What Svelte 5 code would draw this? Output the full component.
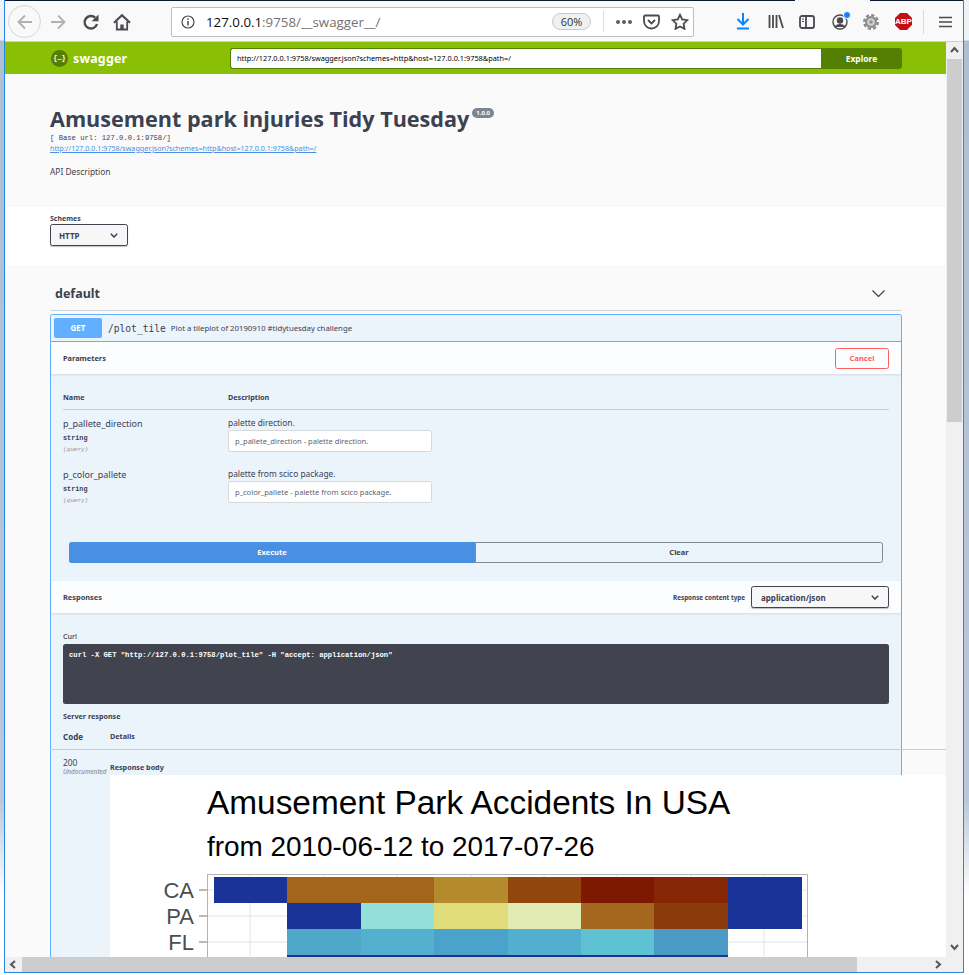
<script lang="ts">
  const NAVY = '#1a3399';
  const cellW = 73.4;
  const rowH = 26;
  const rows: (string | null)[][] = [
    [NAVY, '#a3641c', '#a3641c', '#b58a2c', '#93450e', '#7c1900', '#852705', NAVY],
    [null, NAVY, '#93e0d8', '#e0dc7a', '#e2ebb3', '#a5661d', '#8a3a0b', NAVY],
    [null, '#4fa8ca', '#55b0d0', '#4ba2ca', '#52afcd', '#5fc2d4', '#499bc6', null],
    [null, NAVY, NAVY, NAVY, NAVY, NAVY, NAVY, null],
  ];
  const states = ['CA', 'PA', 'FL'];
  const gridX = [250, 324, 397, 471, 544, 617, 691, 764];
  const gridY = [890, 916, 942];
</script>

<div class="window">
  <div class="frame">
    <div class="titlestrip"><span class="active-tab"></span></div>

    <header class="toolbar">
      <div class="nav">
        <span class="back">
          <svg width="18" height="18" viewBox="0 0 18 18" fill="none" stroke="#b1b1b3" stroke-width="1.8"><path d="M16 9H2.5M9 2.5 2.5 9 9 15.500"/></svg>
        </span>
        <svg class="fwd" width="18" height="18" viewBox="0 0 18 18" fill="none" stroke="#b1b1b3" stroke-width="1.8"><path d="M2 9h13.500M9 2.500 15.500 9 9 15.500"/></svg>
        <svg class="reload" width="18" height="18" viewBox="0 0 18 18" fill="none" stroke="#4a4a4f" stroke-width="2.400"><path d="M15 11a6.300 6.300 0 1 1-1.800-6.400"/><path d="M16.500 1.500v6.800H9.700z" fill="#4a4a4f" stroke="none"/></svg>
        <svg class="home" width="18" height="18" viewBox="0 0 18 18" fill="none" stroke="#4a4a4f"><path d="M1 9.800 9 2.300l8 7.500" stroke-width="2.200"/><path d="M3.800 8.500v8h10.400v-8" stroke-width="1.800"/><path d="M7.300 16.500v-5h3.400v5z" fill="#4a4a4f" stroke="none"/></svg>
      </div>
      <div class="urlbar">
        <svg class="site-icon" width="14" height="14" viewBox="0 0 14 14" fill="none" stroke="#4a4a4f" stroke-width="1.200"><circle cx="7" cy="7" r="6"/><path d="M7 6v4.500M7 3.300v1.500" stroke-width="1.500"/></svg>
        <span class="url"><b>127.0.0.1</b>:9758/__swagger__/</span>
        <span class="zoom-pill">60%</span>
        <span class="sep"></span>
        <span class="dots"><i></i><i></i><i></i></span>
        <svg class="pocket" width="17" height="16" viewBox="0 0 17 16" fill="none" stroke="#4a4a4f" stroke-width="1.800"><path d="M2 1.500h13a1 1 0 0 1 1 1V7a7.500 7.500 0 0 1-15 0V2.500a1 1 0 0 1 1-1z"/><path d="M5 6l3.500 3.500L12 6"/></svg>
        <svg class="star" width="18" height="17" viewBox="0 0 18 17" fill="none" stroke="#4a4a4f" stroke-width="1.800"><path d="M9 1.800l2.200 4.700 5.100.7-3.700 3.500.9 5.100L9 13.400l-4.500 2.400.9-5.100L1.700 7.200l5.100-.7z"/></svg>
      </div>
      <div class="tools">
        <svg class="download" width="14" height="17" viewBox="0 0 14 17" fill="none" stroke="#0a84ff" stroke-width="2"><path d="M7 0v10M1.500 6 7 11.500 12.500 6"/><path d="M1 15.500h12"/></svg>
        <svg width="16" height="15" viewBox="0 0 16 15" fill="none" stroke="#4a4a4f" stroke-width="1.800"><path d="M1.500 1v13M5 1v13M8.500 1v13M11 1l4 13"/></svg>
        <svg width="16" height="14" viewBox="0 0 16 14" fill="none" stroke="#4a4a4f" stroke-width="1.800"><rect x="1" y="1" width="14" height="12" rx="2"/><path d="M7 1v12"/><path d="M3 4h2M3 6.500h2" stroke-width="1.200"/></svg>
        <span class="account">
          <svg width="16" height="16" viewBox="0 0 16 16" fill="none" stroke="#4a4a4f" stroke-width="1.400"><circle cx="8" cy="8" r="7"/><circle cx="8" cy="6.500" r="2.500" fill="#4a4a4f"/><path d="M3.500 13c1-3 8-3 9 0" fill="#4a4a4f"/></svg>
          <i></i>
        </span>
        <svg width="16" height="16" viewBox="0 0 16 16" fill="none"><circle cx="8" cy="8" r="6.800" stroke="#8a8a8a" stroke-width="2.400" stroke-dasharray="3.200 2.140"/><circle cx="8" cy="8" r="6" fill="#8f8f8f"/><circle cx="8" cy="8" r="3.800" fill="#cfcfcf"/><circle cx="8" cy="8" r="1.700" fill="#8f8f8f"/></svg>
        <span class="abp">ABP</span>
        <span class="tool-sep"></span>
        <svg width="13" height="12" viewBox="0 0 13 12" fill="none" stroke="#4a4a4f" stroke-width="1.600"><path d="M0 1.500h13M0 6h13M0 10.500h13"/></svg>
      </div>
    </header>

    <div class="viewport">
      <div class="page-wrap">
        <main class="page">
          <div class="topbar">
            <div class="brand">
              <span class="logo">{'{…}'}</span>
              <span class="brand-name">swagger</span>
            </div>
            <div class="explore">
              <span class="explore-input">http://127.0.0.1:9758/swagger.json?schemes=http&amp;host=127.0.0.1:9758&amp;path=/</span>
              <span class="explore-btn">Explore</span>
            </div>
          </div>

          <section class="info">
            <h2>Amusement park injuries Tidy Tuesday<small>1.0.0</small></h2>
            <pre class="base-url">[ Base url: 127.0.0.1:9758/]</pre>
            <a class="spec-link" href="#top">http://127.0.0.1:9758/swagger.json?schemes=http&amp;host=127.0.0.1:9758&amp;path=/</a>
            <p class="desc">API Description</p>
          </section>

          <section class="schemes">
            <span class="schemes-label">Schemes</span>
            <div class="select scheme-select"><span>HTTP</span><svg width="8" height="5" viewBox="0 0 8 5" fill="none" stroke="#3b4151" stroke-width="1.500"><path d="M.8.800 4 4l3.200-3.200"/></svg></div>
          </section>

          <section class="tag-wrap">
            <div class="tag">
              <span>default</span>
              <svg width="13" height="7" viewBox="0 0 13 7" fill="none" stroke="#3b4151" stroke-width="1.200"><path d="M.5.500l6 6 6-6"/></svg>
            </div>

            <div class="opblock">
              <div class="summary">
                <span class="method">GET</span>
                <span class="path">/plot_tile</span>
                <span class="summary-text">Plot a tileplot of 20190910 #tidytuesday challenge</span>
              </div>

              <div class="section-head params-head">
                <span class="section-title">Parameters</span>
                <span class="cancel">Cancel</span>
              </div>

              <div class="params">
                <div class="params-grid head">
                  <span>Name</span><span>Description</span>
                </div>
                <div class="params-grid row first">
                  <div class="param-name">p_pallete_direction<b>string</b><em>(query)</em></div>
                  <div class="param-desc">palette direction.<span class="text-input">p_pallete_direction - palette direction.</span></div>
                </div>
                <div class="params-grid row">
                  <div class="param-name">p_color_pallete<b>string</b><em>(query)</em></div>
                  <div class="param-desc">palette from scico package.<span class="text-input">p_color_pallete - palette from scico package.</span></div>
                </div>
              </div>

              <div class="actions">
                <span class="execute">Execute</span>
                <span class="clear">Clear</span>
              </div>

              <div class="section-head responses-head">
                <span class="section-title">Responses</span>
                <div class="content-type">
                  <span class="ct-label">Response content type</span>
                  <div class="select ct-select"><span>application/json</span><svg width="8" height="5" viewBox="0 0 8 5" fill="none" stroke="#3b4151" stroke-width="1.500"><path d="M.8.800 4 4l3.200-3.200"/></svg></div>
                </div>
              </div>

              <div class="responses">
                <span class="curl-label">Curl</span>
                <pre class="curl">curl -X GET "http://127.0.0.1:9758/plot_tile" -H "accept: application/json"</pre>
                <span class="server-label">Server response</span>
                <div class="resp-head"><span class="code-h">Code</span><span class="details-h">Details</span></div>
                <div class="resp-row">
                  <div class="code-cell">200<em>Undocumented</em></div>
                  <div class="details-cell">
                    <span class="body-label">Response body</span>
                  </div>
                </div>
              </div>
            </div>
            <span class="overflow-line"></span>
          </section>

          <div class="plot">
            <svg width="836" height="182" viewBox="110 775 836 182">
              <text x="207" y="814" class="plot-title">Amusement Park Accidents In USA</text>
              <text x="207" y="856" class="plot-sub">from 2010-06-12 to 2017-07-26</text>
              <rect x="207.500" y="874.500" width="600" height="90" fill="#fff" stroke="#b3b3b3" />
              {#each gridX as x}
                <path d="M{x} 875v82" stroke="#e4e4e4" />
              {/each}
              {#each gridY as y}
                <path d="M208 {y}h599" stroke="#e4e4e4" />
              {/each}
              {#each rows as row, r}
                {#each row as fill, c}
                  {#if fill}
                    <rect x={214 + c * cellW} y={877 + r * rowH} width={cellW + 0.5} height={rowH} {fill} shape-rendering="crispEdges" />
                  {/if}
                {/each}
              {/each}
              {#each states as s, i}
                <text x="194" y={898 + i * 26} class="axis" text-anchor="end">{s}</text>
                <path d="M199 {890 + i * 26}h8" stroke="#777" />
              {/each}
            </svg>
          </div>
        </main>
        <div class="hscroll">
          <svg class="arrow" width="8" height="9" viewBox="0 0 8 9" fill="none" stroke="#555" stroke-width="2"><path d="M6 1 2 4.500 6 8"/></svg>
          <span class="hthumb"></span>
          <svg class="arrow" width="8" height="9" viewBox="0 0 8 9" fill="none" stroke="#555" stroke-width="2"><path d="M2 1l4 3.500L2 8"/></svg>
        </div>
      </div>
      <div class="vscroll">
        <svg width="9" height="8" viewBox="0 0 9 8" fill="none" stroke="#555" stroke-width="2"><path d="M1 6l3.500-4L8 6"/></svg>
        <span class="vthumb"></span>
        <svg class="vdown" width="9" height="8" viewBox="0 0 9 8" fill="none" stroke="#555" stroke-width="2"><path d="M1 2l3.500 4L8 2"/></svg>
      </div>
    </div>
  </div>
</div>

<style>
  :global(body) {
    margin: 0;
    background: #fff;
  }

  .window {
    width: 969px;
    height: 975px;
    box-sizing: border-box;
    padding: 0 5px 2px 4px;
    background: linear-gradient(#eef1f5 0, #eef1f5 40px, #aebfd3 41px, #b9c8da 82%, #fff 92%);
    font-family: 'Noto Sans', 'Open Sans', sans-serif;
    color: #3b4151;
  }

  .frame {
    height: 100%;
    box-sizing: border-box;
    border-left: 1px solid #2a85e0;
    border-right: 1px solid #2a85e0;
    border-bottom: 1px solid #2a85e0;
    display: flex;
    flex-direction: column;
    overflow: hidden;
  }

  .titlestrip {
    height: 1px;
    background: #0c1a33;
    position: relative;
    flex: none;
  }

  .active-tab {
    position: absolute;
    left: 790px;
    width: 75px;
    top: 0;
    height: 1px;
    background: #f9f9fa;
  }

  .toolbar {
    flex: none;
    height: 41px;
    background: #f9f9fa;
    border-bottom: 1px solid #cfcfd1;
    display: flex;
    align-items: center;
    box-sizing: border-box;
    padding-top: 1px;
  }

  .nav {
    display: flex;
    align-items: center;
    width: 166px;
    flex: none;
    padding-left: 3px;
    box-sizing: border-box;
  }

  .back {
    width: 31px;
    height: 31px;
    border: 1px solid #d6d6d7;
    border-radius: 50%;
    display: flex;
    align-items: center;
    justify-content: center;
    background: #f9f9fa;
  }

  .fwd {
    margin-left: 8px;
  }

  .reload {
    margin-left: 15px;
  }

  .home {
    margin-left: 13px;
  }

  .urlbar {
    width: 523px;
    height: 30px;
    box-sizing: border-box;
    background: #fff;
    border: 1px solid #bebebe;
    border-radius: 2px;
    display: flex;
    align-items: center;
    padding: 0 4px 0 9px;
  }

  .url {
    margin-left: 11px;
    font-family: 'Open Sans', sans-serif;
    font-size: 13.300px;
    color: #737373;
    flex: 1;
  }

  .url b {
    font-weight: 400;
    color: #0c0c0d;
  }

  .zoom-pill {
    width: 37px;
    height: 15px;
    line-height: 15px;
    border: 1px solid #c8c8c8;
    background: #f0f0f0;
    border-radius: 9px;
    text-align: center;
    font-size: 11px;
    font-family: 'Open Sans', sans-serif;
    color: #333;
  }

  .sep {
    width: 1px;
    height: 21px;
    background: #dcdcdc;
    margin: 0 12px;
  }

  .dots {
    display: flex;
    gap: 2px;
    margin-right: 11px;
  }

  .dots i {
    width: 4px;
    height: 4px;
    border-radius: 50%;
    background: #5d5d60;
  }

  .star {
    margin-left: 11px;
  }

  .tools {
    display: flex;
    align-items: center;
    margin-left: 42px;
    gap: 15px;
  }

  .download {
    margin-right: 3px;
  }

  .account {
    position: relative;
    display: flex;
    margin-left: 2px;
  }

  .account i {
    position: absolute;
    top: -3px;
    right: -3px;
    width: 6px;
    height: 6px;
    border-radius: 50%;
    background: #0a84ff;
    border: 1px solid #f9f9fa;
  }

  .abp {
    width: 17px;
    height: 17px;
    margin-left: 1px;
    clip-path: polygon(30% 0, 70% 0, 100% 30%, 100% 70%, 70% 100%, 30% 100%, 0 70%, 0 30%);
    background: #c70d14;
    color: #fff;
    font: 700 8px 'Liberation Sans', sans-serif;
    text-align: center;
    line-height: 17px;
  }

  .tool-sep {
    width: 1px;
    height: 24px;
    background: #d8d8d8;
    margin-left: -4px;
  }

  .viewport {
    flex: 1;
    min-height: 0;
    display: flex;
  }

  .page-wrap {
    width: 941px;
    flex: none;
    display: flex;
    flex-direction: column;
    min-height: 0;
  }

  .page {
    flex: 1;
    min-height: 0;
    overflow: hidden;
    background: #fff;
    position: relative;
  }

  .topbar {
    height: 32px;
    background: #89bf04;
    display: flex;
    align-items: center;
    padding-left: 46px;
  }

  .brand {
    width: 180px;
    display: flex;
    align-items: center;
    gap: 5px;
  }

  .logo {
    width: 17px;
    height: 17px;
    border-radius: 50%;
    background: #547f00;
    color: #fff;
    font: 700 7px 'Liberation Mono', monospace;
    text-align: center;
    line-height: 17px;
  }

  .brand-name {
    color: #fff;
    font-weight: 700;
    font-size: 12.400px;
    letter-spacing: 0.2px;
  }

  .explore {
    display: flex;
    width: 672px;
    height: 21px;
    margin-left: -1px;
  }

  .explore-input {
    flex: 1;
    background: #fff;
    border: 1px solid #547f00;
    border-right: 0;
    border-radius: 3px 0 0 3px;
    font-size: 7.350px;
    color: #000;
    line-height: 19px;
    padding-left: 6px;
  }

  .explore-btn {
    width: 81px;
    background: #547f00;
    color: #fff;
    font-weight: 700;
    font-size: 8.500px;
    line-height: 21px;
    text-align: center;
    border-radius: 0 3px 3px 0;
  }

  .info {
    height: 133px;
    background: #fafafa;
    box-sizing: border-box;
    padding: 30px 0 0 45px;
  }

  h2 {
    margin: 0;
    font-family: 'Open Sans', sans-serif;
    font-size: 21.600px;
    font-weight: 700;
    line-height: 30px;
    display: flex;
    align-items: flex-start;
  }

  h2 small {
    margin: 4px 0 0 3px;
    height: 10px;
    line-height: 10px;
    padding: 0 4px;
    background: #7d8492;
    border-radius: 5px;
    font-size: 6px;
    color: #fff;
  }

  .base-url {
    margin: -1px 0 0;
    font-family: 'Liberation Mono', monospace;
    font-size: 7.200px;
    line-height: 10px;
  }

  .spec-link {
    display: block;
    font-size: 7.150px;
    line-height: 11px;
    color: #4990e2;
    margin-top: 0;
  }

  .desc {
    margin: 12px 0 0;
    font-size: 8.400px;
    line-height: 12px;
  }

  .schemes {
    height: 58px;
    box-sizing: border-box;
    background: #fff;
    padding: 7px 0 0 45px;
    box-shadow: 0 1px 2px rgba(0, 0, 0, 0.15);
    position: relative;
  }

  .schemes-label {
    display: block;
    font-size: 7px;
    font-weight: 700;
    line-height: 9px;
  }

  .select {
    box-sizing: border-box;
    border: 1px solid #41444e;
    border-radius: 2.500px;
    background: #f7f7f7;
    display: flex;
    align-items: center;
    justify-content: space-between;
    box-shadow: 0 1px 1px rgba(0, 0, 0, 0.25);
    font-weight: 700;
  }

  .scheme-select {
    width: 78px;
    height: 22px;
    margin-top: 1px;
    padding: 0 9px 0 8px;
    font-size: 8px;
  }

  .tag-wrap {
    background: #fafafa;
    padding: 0 44px 0 45px;
    position: relative;
  }

  .tag {
    height: 46px;
    box-sizing: border-box;
    padding: 11px 17px 0 5px;
    border-bottom: 1px solid #d1d2d4;
    display: flex;
    align-items: center;
    justify-content: space-between;
    font-size: 12.500px;
    font-weight: 700;
  }

  .opblock {
    margin-top: 3px;
    border: 1px solid #61affe;
    border-radius: 2.500px;
    background: #ebf3fb;
    height: 700px;
  }

  .summary {
    height: 27px;
    box-sizing: border-box;
    border-bottom: 1px solid #61affe;
    display: flex;
    align-items: center;
    padding: 0 3px;
  }

  .method {
    width: 48px;
    height: 20px;
    background: #61affe;
    border-radius: 2px;
    color: #fff;
    font-size: 8px;
    font-weight: 700;
    text-align: center;
    line-height: 20px;
  }

  .path {
    margin-left: 6px;
    font-family: 'DejaVu Sans Mono', monospace;
    font-size: 9.600px;
    font-weight: 500;
  }

  .summary-text {
    margin-left: 5px;
    font-size: 7.750px;
  }

  .section-head {
    background: rgba(255, 255, 255, 0.8);
    box-shadow: 0 1px 2px rgba(0, 0, 0, 0.1);
    display: flex;
    align-items: center;
    justify-content: space-between;
    padding: 0 12px;
    position: relative;
  }

  .params-head {
    height: 32px;
  }

  .section-title {
    font-size: 7.400px;
    font-weight: 700;
  }

  .cancel {
    width: 54px;
    height: 21px;
    box-sizing: border-box;
    border: 1px solid #ff6060;
    border-radius: 2.500px;
    color: #ff6060;
    font-size: 7.500px;
    font-weight: 700;
    text-align: center;
    line-height: 19px;
  }

  .params {
    padding: 0 12px;
    height: 168px;
    box-sizing: border-box;
  }

  .params-grid {
    display: grid;
    grid-template-columns: 165px 1fr;
  }

  .params-grid.head {
    height: 36px;
    box-sizing: border-box;
    align-items: end;
    border-bottom: 1px solid #c6ced9;
    padding-bottom: 7px;
    font-size: 7.200px;
    font-weight: 700;
  }

  .params-grid.row {
    height: 51px;
  }

  .params-grid.first {
    margin-top: 8px;
  }

  .param-name {
    font-size: 9px;
    line-height: 14px;
    margin-top: -1px;
    display: flex;
    flex-direction: column;
  }

  .param-name b {
    font-family: 'Liberation Mono', monospace;
    font-size: 6.800px;
    line-height: 11px;
    margin-top: 2px;
  }

  .param-name em {
    font-family: 'Liberation Mono', monospace;
    font-size: 6px;
    line-height: 12px;
    color: rgba(59, 65, 81, 0.6);
  }

  .param-desc {
    font-size: 8.400px;
    line-height: 11px;
    margin-top: -1px;
    display: flex;
    flex-direction: column;
  }

  .text-input {
    width: 204px;
    height: 22px;
    box-sizing: border-box;
    margin-top: 2px;
    background: #fff;
    border: 1px solid #d9d9d9;
    border-radius: 2.500px;
    font-size: 7.550px;
    line-height: 20px;
    padding-left: 6px;
    color: #5c6270;
  }

  .actions {
    display: flex;
    margin: 0 18px;
    height: 21px;
    padding-bottom: 18px;
  }

  .execute,
  .clear {
    flex: 1;
    font-size: 7.500px;
    font-weight: 700;
    text-align: center;
    line-height: 21px;
    box-sizing: border-box;
  }

  .execute {
    background: #4990e2;
    color: #fff;
    border-radius: 2.500px 0 0 2.500px;
  }

  .clear {
    border: 1px solid #888;
    border-radius: 0 2.500px 2.500px 0;
    line-height: 19px;
  }

  .responses-head {
    height: 32px;
  }

  .content-type {
    display: flex;
    align-items: center;
    gap: 6px;
  }

  .ct-label {
    font-size: 6.300px;
    font-weight: 700;
  }

  .ct-select {
    width: 138px;
    height: 22px;
    padding: 0 9px;
    font-size: 8px;
  }

  .responses {
    padding: 18px 12px 0;
  }

  .curl-label {
    display: block;
    font-size: 7.200px;
    font-weight: 500;
    line-height: 10px;
  }

  .curl {
    margin: 3px 0 0;
    height: 60px;
    box-sizing: border-box;
    background: #41444e;
    border-radius: 2.500px;
    color: #fff;
    font-family: 'Liberation Mono', monospace;
    font-weight: 700;
    font-size: 7.200px;
    padding: 7px 6px 0;
  }

  .server-label {
    display: block;
    font-size: 7.200px;
    font-weight: 700;
    line-height: 10px;
    margin-top: 7px;
  }

  .resp-head {
    display: flex;
    align-items: center;
    height: 33px;
    box-sizing: border-box;
    padding-bottom: 3px;
  }

  .code-h {
    width: 47px;
    font-size: 8px;
    font-weight: 700;
  }

  .details-h {
    font-size: 7.200px;
    font-weight: 700;
  }

  .resp-row {
    display: flex;
    padding-top: 4px;
  }

  .code-cell {
    width: 47px;
    flex: none;
    font-size: 8.400px;
    line-height: 10px;
    display: flex;
    flex-direction: column;
  }

  .code-cell em {
    font-size: 6.400px;
    line-height: 8px;
    color: #7b808c;
    white-space: nowrap;
  }

  .details-cell {
    padding-top: 4px;
  }

  .body-label {
    font-size: 7.200px;
    font-weight: 700;
    line-height: 10px;
    display: block;
  }

  .overflow-line {
    position: absolute;
    left: 45px;
    right: 0;
    top: 484px;
    height: 1px;
    background: #c6ced9;
  }

  .plot {
    position: absolute;
    left: 105px;
    top: 733px;
    width: 836px;
    height: 182px;
    background: #fff;
    overflow: hidden;
  }

  .plot svg {
    display: block;
  }

  .plot text {
    font-family: 'Liberation Sans', sans-serif;
    fill: #000;
  }

  .plot .plot-title {
    font-size: 33.400px;
  }

  .plot .plot-sub {
    font-size: 27.900px;
  }

  .plot .axis {
    font-size: 22px;
    fill: #4d4d4d;
  }

  .hscroll {
    flex: none;
    height: 15px;
    background: #f0f0f0;
    display: flex;
    align-items: center;
    padding: 0 4px;
  }

  .hthumb {
    width: 836px;
    height: 15px;
    background: #cdcdcd;
    margin: 0 77px 0 5px;
  }

  .vscroll {
    width: 17px;
    flex: none;
    background: #f0f0f0;
    display: flex;
    flex-direction: column;
    align-items: center;
    padding-top: 4px;
    box-sizing: border-box;
  }

  .vthumb {
    width: 15px;
    height: 363px;
    background: #cdcdcd;
    margin-top: 5px;
  }

  .vdown {
    margin-top: auto;
    margin-bottom: 21px;
  }
</style>
